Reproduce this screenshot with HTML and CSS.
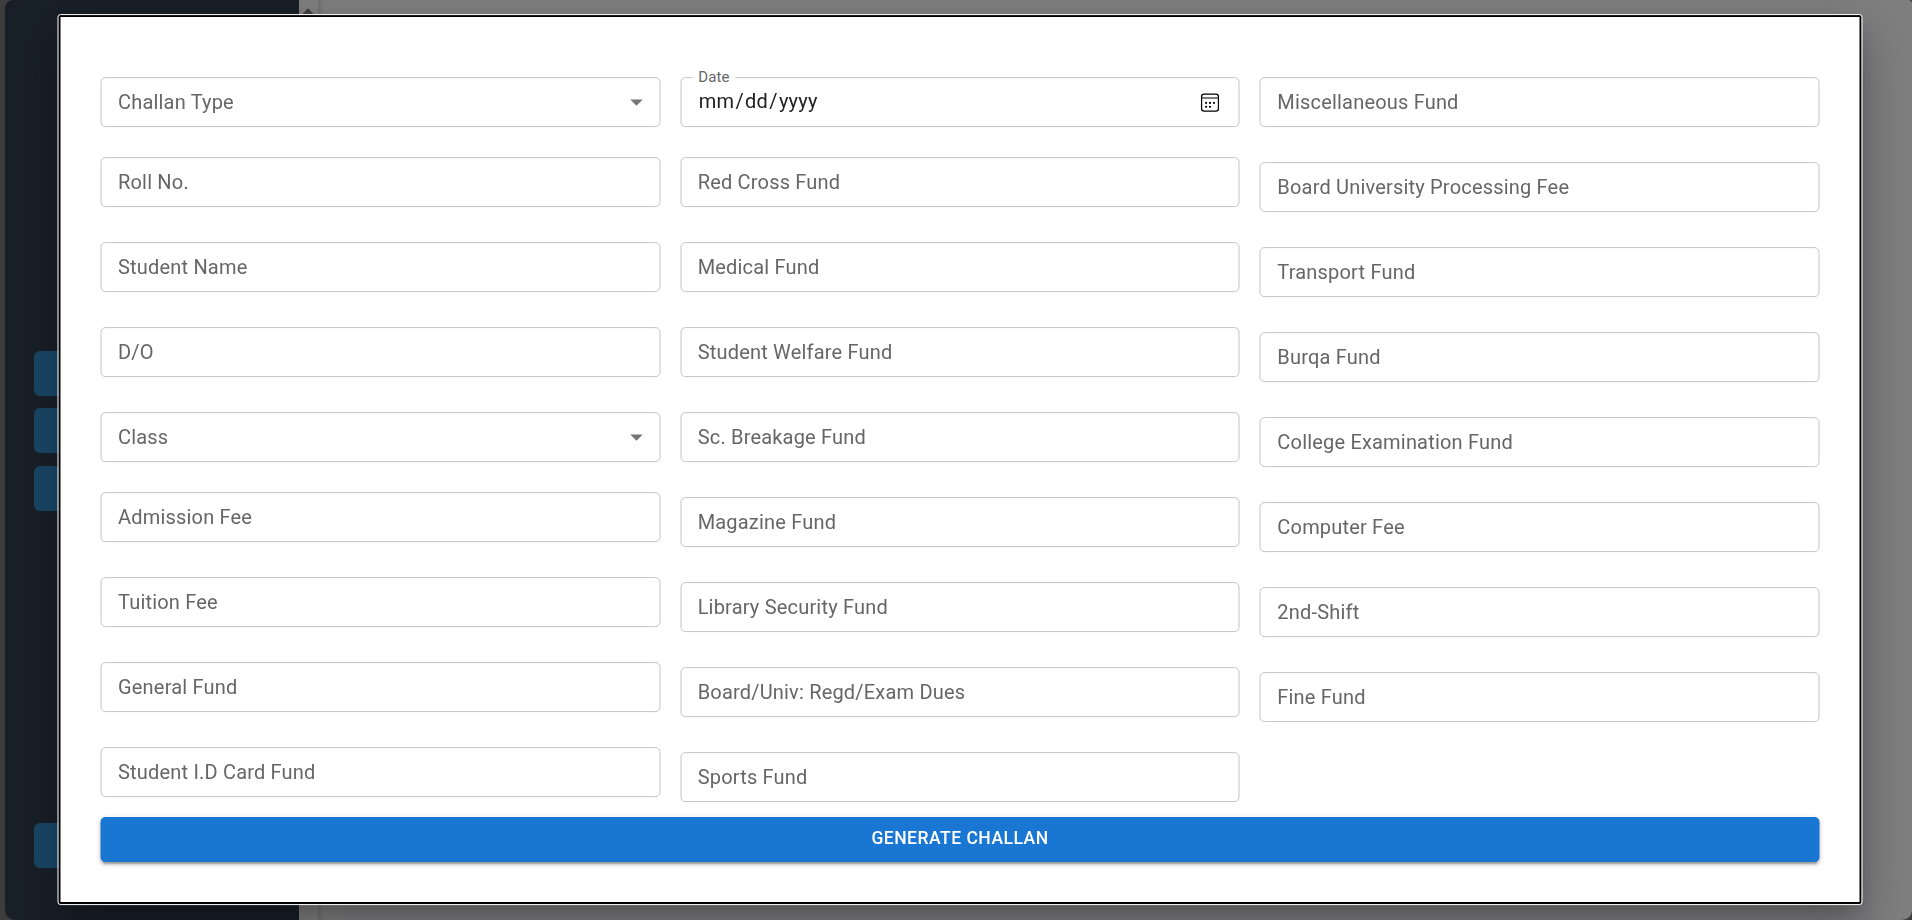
FILE: index.html
```html
<!DOCTYPE html>
<html lang="en">
<head>
<meta charset="utf-8">
<title>Generate Challan</title>
<link rel="stylesheet" href="styles.css">
</head>
<body>
<div class="app">
  <aside class="sidebar">
    <div class="nav-group"><div class="nav-item"></div><div class="nav-item"></div><div class="nav-item"></div></div>
    <div class="nav-item"></div>
  </aside>
  <div class="scrollbar"><svg class="scroll-arrow" viewBox="0 0 12 8"><path d="M6 0.5 Q6.6 0.5 7 1 L11.3 6 Q12 7.5 10.5 7.5 H1.5 Q0 7.5 0.7 6 L5 1 Q5.4 0.5 6 0.5Z"/></svg></div>
  <main class="main"><div class="panel"></div></main>
</div>
<div class="backdrop"></div>
<form class="modal">
  <div class="columns">
    <div class="column">
      <div class="field field-tight"><span>Challan Type</span><svg class="caret" viewBox="0 0 24 24"><path d="M7 10l5 5 5-5z"/></svg></div>
      <div class="field">Roll No.</div>
      <div class="field">Student Name</div>
      <div class="field">D/O</div>
      <div class="field field-tight"><span>Class</span><svg class="caret" viewBox="0 0 24 24"><path d="M7 10l5 5 5-5z"/></svg></div>
      <div class="field">Admission Fee</div>
      <div class="field">Tuition Fee</div>
      <div class="field">General Fund</div>
      <div class="field">Student I.D Card Fund</div>
    </div>
    <div class="column">
      <div class="field field-tight field-date"><span class="label">Date</span><span class="date"><span>mm</span><span class="slash">/</span><span>dd</span><span class="slash">/</span><span>yyyy</span></span>
        <svg class="calendar" viewBox="0 0 18 18"><rect x="1" y="1" width="16" height="16" rx="2.4" fill="none" stroke="#000" stroke-width="1.2"/><path d="M1 4.6H17" stroke="#000" stroke-width="1.1"/><g><circle cx="5.3" cy="9.3" r="1"/><circle cx="9" cy="9.3" r="1"/><circle cx="12.7" cy="9.3" r="1"/><circle cx="5.3" cy="13" r="1"/><circle cx="9" cy="13" r="1"/></g></svg></div>
      <div class="field">Red Cross Fund</div>
      <div class="field">Medical Fund</div>
      <div class="field">Student Welfare Fund</div>
      <div class="field">Sc. Breakage Fund</div>
      <div class="field">Magazine Fund</div>
      <div class="field">Library Security Fund</div>
      <div class="field">Board/Univ: Regd/Exam Dues</div>
      <div class="field">Sports Fund</div>
    </div>
    <div class="column">
      <div class="field">Miscellaneous Fund</div>
      <div class="field">Board University Processing Fee</div>
      <div class="field">Transport Fund</div>
      <div class="field">Burqa Fund</div>
      <div class="field">College Examination Fund</div>
      <div class="field">Computer Fee</div>
      <div class="field">2nd-Shift</div>
      <div class="field">Fine Fund</div>
    </div>
  </div>
  <button class="submit" type="button">GENERATE CHALLAN</button>
</form>
</body>
</html>
```
FILE: styles.css
```css
* { box-sizing: border-box; }
body {
  margin: 0;
  height: 920px;
  overflow: hidden;
  background: #7a7a7a;
  font-family: Roboto, "Liberation Sans", sans-serif;
}
.app { display: flex; height: 920px; padding-left: 5px; background: #7a7a7a; }
.sidebar {
  width: 294px;
  padding: 351px 29px 0;
  border-radius: 8px 0 0 10px;
  background: #303f50;
}
.nav-group { display: grid; grid-template-rows: 57px 58px 45px; margin-bottom: 312px; }
.nav-item { height: 45px; border-radius: 6px; background: #3290d0; }
.scrollbar { width: 19px; padding: 8px 3px; background: #fff; }
.scroll-arrow { display: block; width: 12px; height: 8px; fill: #858585; }
.main {
  flex: 1;
  padding: 23px 41px 0 25px;
  border-radius: 0 4px 10px 0;
  background: #fff;
  box-shadow: inset 5px 0 5px -3px rgba(0, 0, 0, .15);
}
.panel { height: 897px; background: #f8f8fc; }
.backdrop { position: fixed; inset: 0; background: rgba(0, 0, 0, .5); }
.modal {
  position: fixed;
  top: 15px;
  left: 58px;
  width: 1803px;
  height: 889px;
  padding: 60px 40px 40px;
  border: 2px solid #000;
  background: #fff;
  outline: 1px solid #fff;
  border-radius: 2px;
  transform: translate(.5px, .1px);
  box-shadow: 0 13.75px 18.75px -8.75px rgba(0, 0, 0, .2),
    0 30px 47.5px 3.75px rgba(0, 0, 0, .14),
    0 11.25px 57.5px 10px rgba(0, 0, 0, .12);
}
.columns { display: grid; grid-template-columns: repeat(3, 1fr); gap: 20px; height: 740px; }
.field {
  position: relative;
  display: flex;
  align-items: center;
  justify-content: space-between;
  height: 50px;
  margin-bottom: 35px;
  padding: 0 8px 0 16.5px;
  border: 1px solid #c4c4c4;
  border-radius: 5px;
  color: #666;
  font-size: 20px;
  letter-spacing: .1876px;
  white-space: nowrap;
}
.field-tight { margin-bottom: 30px; }
.caret { width: 30px; height: 30px; fill: #757575; }
.field-date { padding-right: 19.5px; }
.label {
  position: absolute;
  top: -10px;
  left: 11px;
  padding: 0 6px;
  background: #fff;
  font-size: 15px;
  line-height: 18px;
  letter-spacing: .14px;
}
.date { display: flex; color: #212121; padding-bottom: 2px; padding-left: 1px; }
.slash { padding: 0 1.25px; }
.calendar { width: 19px; height: 19px; }
.submit {
  display: block;
  width: 100%;
  height: 45px;
  padding: 0 0 2px;
  border: 0;
  border-radius: 5px;
  background: #1976d2;
  color: #fff;
  font: 500 17.5px/43px Roboto, "Liberation Sans", sans-serif;
  letter-spacing: .5px;
  box-shadow: 0 3.75px 1.25px -2.5px rgba(0, 0, 0, .2),
    0 2.5px 2.5px rgba(0, 0, 0, .14),
    0 1.25px 6.25px rgba(0, 0, 0, .12);
}
```
